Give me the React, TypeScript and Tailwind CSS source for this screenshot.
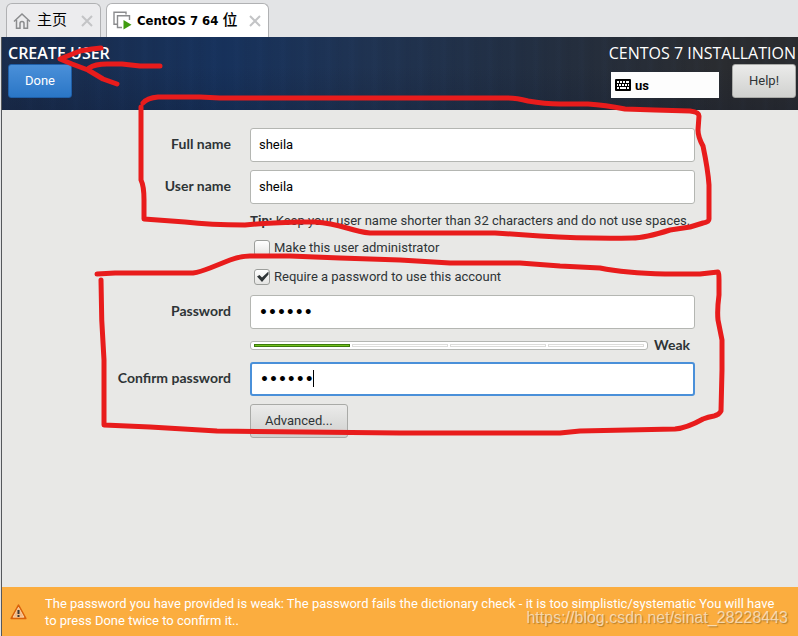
import { useState } from "react";
import type { ReactNode } from "react";

const BUTTON = "h-[34px] pb-[2px] rounded-[3px] border";
const BUTTON_GREY = "border-[#a9aaa7] bg-linear-to-b from-[#ebebea] to-[#d0d1cf] text-[#2e3436]";
const ENTRY = "w-full h-[34px] px-2 rounded-[3px] bg-white text-black outline-none";
const SECRET = "text-[14px] font-bold font-['DejaVu_Sans',sans-serif]";
const LABEL = "pb-[3px] text-[14px] font-bold font-['Lato',sans-serif]";

const STROKES = [
  // arrow to the Done button
  "M101 48L92 49L80 51L60 59L72 64L88 70L103 79L117 84",
  "M89 68Q95 64 107 64L122 64L140 66L160 66",
  // names
  "M143 103Q147 98 158 97L200 97L220 98H508Q517 98 528 101Q545 104 560 104H588Q605 105 625 109L655 110L690 111Q699 112 699 116L698 130Q698 137 703 146Q708 170 709 185V219Q709 222 703 223L690 227L670 230Q645 238 632 238Q590 239 540 236L495 233H370Q360 232 347 228Q330 223 315 222H298Q265 223 245 225Q210 225 185 222L144 219V200Q144 186 141 180V107",
  // passwords
  "M97 274L115 273H193Q200 272 210 268L230 260Q240 256 250 256H290L340 258L400 260L450 263H520L560 266L600 268Q625 273 665 274H700L718 272Q719 273 719 280V295Q717 310 718 320L722 340V370L721 411Q719 415 714 416Q708 417 703 419Q687 428 675 429L580 431L560 433H400L217 431L150 427L104 425V360Q101 320 101 280",
];

function HomeIcon() {
  return (
    <svg width="18" height="18" viewBox="0 0 18 18" fill="none" stroke="#8b8c8e" strokeWidth="1.5">
      <path d="M1 9.5L9 2L17 9.5" />
      <path d="M3.5 8V16.2H7V11.5Q7 9.5 9 9.5T11 11.5V16.2H14.5V8" />
    </svg>
  );
}

function MachineIcon() {
  return (
    <svg width="19" height="19" viewBox="0 0 19 19" fill="none">
      <path d="M4 13.2H1V1.2H13V3.5" stroke="#8b8c8e" strokeWidth="1.4" />
      <path d="M9 16.5H4.5V4.7H16.5V9" stroke="#8b8c8e" strokeWidth="1.4" />
      <path d="M10.5 9L18.5 13.8L10.5 18.5Z" fill="#3f9c0f" />
    </svg>
  );
}

function CloseIcon() {
  return (
    <svg width="12" height="12" viewBox="0 0 12 12" stroke="#c3c4c6" strokeWidth="2">
      <path d="M1 1L11 11M11 1L1 11" />
    </svg>
  );
}

function KeyboardIcon() {
  return (
    <svg width="16" height="12" viewBox="0 0 16 12">
      <rect width="16" height="12" rx="1" fill="#000" />
      <path d="M2 3H4M5 3H7M8 3H10M11 3H14M2 6H3M4 6H6M7 6H9M10 6H12M13 6H14M2 9H4M5 9H11M12 9H14" stroke="#fff" strokeWidth="2" />
    </svg>
  );
}

function WarningIcon() {
  return (
    <svg width="17" height="16" viewBox="0 0 17 16">
      <path d="M8.5 1.2L15.8 14.5H1.2Z" fill="#f7a75a" stroke="#d9620a" strokeWidth="1.6" strokeLinejoin="round" />
      <path d="M8.5 3.4L13.8 13H3.2Z" fill="#f0b987" stroke="#fbd3a8" strokeWidth="0.8" />
      <path d="M8.5 6V10M8.5 11V13" stroke="#3b3835" strokeWidth="2" />
    </svg>
  );
}

function CheckOption({ id, checked, onChange, children }: { id: string; checked: boolean; onChange: (v: boolean) => void; children: ReactNode }) {
  return (
    <div className="col-start-2 flex items-center gap-1 h-[21px] pl-1">
      <span className="relative size-4 shrink-0">
        <input
          id={id}
          type="checkbox"
          checked={checked}
          onChange={e => onChange(e.target.checked)}
          className="block appearance-none size-4 rounded-[3px] border border-[#9c9e9b] bg-linear-to-b from-white to-[#e4e4e2]"
        />
        {checked && (
          <svg className="absolute inset-0 pointer-events-none" width="16" height="16" viewBox="0 0 16 16">
            <path d="M3 7.5L5.5 6L8 8.5L14.5 2.5V5.5L8 13Z" fill="#2e3436" />
          </svg>
        )}
      </span>
      <label htmlFor={id}>{children}</label>
    </div>
  );
}

export default function App() {
  const [fullName, setFullName] = useState("sheila");
  const [userName, setUserName] = useState("sheila");
  const [admin, setAdmin] = useState(false);
  const [requirePassword, setRequirePassword] = useState(true);
  const [password, setPassword] = useState("sheila");
  const [confirm, setConfirm] = useState("sheila");

  return (
    <div className="relative min-h-screen flex flex-col bg-[#e3e4e6] text-[13px] leading-[17px] text-[#2e3436] font-['Roboto','Noto_Sans_CJK_SC',sans-serif]">
      {/* VM tabs */}
      <nav className="flex items-end gap-[5px] h-[37px] pl-[6px] text-black font-['DejaVu_Sans_Condensed','Noto_Sans_CJK_SC',sans-serif]">
        <div className="flex items-center h-[34px] pl-[6px] pr-[7px] gap-[14px] rounded-t-md border border-b-0 border-[#b0b1b3] bg-[#ececee]">
          <a href="#home" className="flex items-center gap-[6px] text-[15px]">
            <HomeIcon />
            主页
          </a>
          <button aria-label="Close home tab"><CloseIcon /></button>
        </div>
        <div className="flex items-center h-[34px] pl-[6px] pr-[7px] gap-[12px] rounded-t-md border border-b-0 border-[#b0b1b3] bg-white">
          <a href="#vm" className="flex items-center gap-[5px] text-[13px] font-bold">
            <MachineIcon />
            <span>CentOS 7 64 <span className="text-[15px] font-medium">位</span></span>
          </a>
          <button aria-label="Close machine tab"><CloseIcon /></button>
        </div>
      </nav>

      <div className="flex-1 flex flex-col ml-px border-l border-[#55585c] bg-[#e8e8e6]">
        {/* Banner */}
        <header className="flex justify-between h-[73px] pl-[6px] pr-[2px] pt-2 text-white bg-[linear-gradient(to_bottom,transparent_40%,rgba(10,18,40,0.2)),repeating-linear-gradient(to_right,transparent_0px,rgba(90,140,220,0.02)_5px,transparent_9px,rgba(0,0,0,0.02)_14px,transparent_23px),linear-gradient(to_right,#1a2c4b,#17325c_28%,#1f3352_45%,#222f43_65%,#2a2c30_90%)]">
          <div className="flex flex-col items-start gap-[2px]">
            <h1 className="text-[16px] font-semibold font-['Open_Sans',sans-serif]">CREATE USER</h1>
            <button className={`px-4 border-[#1f5fa8] bg-linear-to-b from-[#4a90d9] to-[#2a76c6] ${BUTTON}`}>Done</button>
          </div>
          <div className="flex flex-col items-end gap-[2px]">
            <p className="text-[16px] font-['Open_Sans',sans-serif]">CENTOS 7 INSTALLATION</p>
            <div className="flex items-center gap-[13px]">
              <div className="flex items-center gap-1 w-[108px] h-[26px] mt-2 px-1 bg-[#fdfdfd] text-black font-bold">
                <KeyboardIcon />
                us
              </div>
              <button className={`px-4 ${BUTTON} ${BUTTON_GREY}`}>Help!</button>
            </div>
          </div>
        </header>

        {/* Account form */}
        <form className="flex-1 grid grid-cols-[229px_minmax(0,1fr)] content-start items-center gap-x-[19px] gap-y-2 pt-[18px] pr-[103px]" onSubmit={e => e.preventDefault()}>
          <label htmlFor="full-name" className={`text-right ${LABEL}`}>Full name</label>
          <input id="full-name" value={fullName} onChange={e => setFullName(e.target.value)} className={`${ENTRY} pb-[2px] border border-[#b4b6b2]`} />

          <label htmlFor="user-name" className={`text-right ${LABEL}`}>User name</label>
          <input id="user-name" value={userName} onChange={e => setUserName(e.target.value)} className={`${ENTRY} pb-[2px] border border-[#b4b6b2]`} />

          <p className="col-start-2 whitespace-nowrap"><b className="font-bold">Tip:</b> Keep your user name shorter than 32 characters and do not use spaces.</p>

          <CheckOption id="admin" checked={admin} onChange={setAdmin}>Make this user administrator</CheckOption>
          <CheckOption id="require" checked={requirePassword} onChange={setRequirePassword}>Require a password to use this account</CheckOption>

          <label htmlFor="password" className={`text-right ${LABEL}`}>Password</label>
          <input id="password" type="password" value={password} onChange={e => setPassword(e.target.value)} className={`${ENTRY} ${SECRET} border border-[#b4b6b2]`} />

          <div className="col-start-2 flex items-center gap-[6px] h-[17px] pr-[5px]">
            <div className="flex-1 flex gap-[2px] h-[9px] py-[2px] px-[3px] rounded-[3px] border border-[#b4b6b2] bg-white">
              <span className="flex-1 border border-[#3c7a0c] bg-[#73c21e]" />
              <span className="flex-1 border border-[#dcdcda]" />
              <span className="flex-1 border border-[#dcdcda]" />
              <span className="flex-1 border border-[#dcdcda]" />
            </div>
            <span className={LABEL}>Weak</span>
          </div>

          <label htmlFor="confirm" className={`text-right ${LABEL}`}>Confirm password</label>
          <div className="relative">
            <input id="confirm" type="password" value={confirm} onChange={e => setConfirm(e.target.value)} className={`${ENTRY} ${SECRET} block border-2 border-[#4a90d9]`} />
            <span className="absolute left-[63px] top-2 w-px h-[17px] bg-black" />
          </div>

          <button type="button" className={`col-start-2 justify-self-start px-[14px] ${BUTTON} ${BUTTON_GREY}`}>Advanced...</button>
        </form>

        {/* Warning bar */}
        <footer className="relative flex items-center gap-[18px] h-[49px] pl-2 pr-[10px] bg-[#fbad3f] text-white">
          <span className="shrink-0"><WarningIcon /></span>
          <p>The password you have provided is weak: The password fails the dictionary check - it is too simplistic/systematic You will have to press Done twice to confirm it..</p>
          <span className="absolute right-[10px] bottom-[10px] text-[16px] text-white/60 [text-shadow:1px_1px_1px_rgba(120,80,20,0.5)] font-['Liberation_Sans',sans-serif]">https://blog.csdn.net/sinat_28228443</span>
        </footer>
      </div>

      {/* Red pen marks */}
      <svg className="absolute inset-0 w-full h-full pointer-events-none" fill="none" stroke="#e81c1c" strokeWidth="5" strokeLinecap="round" strokeLinejoin="round">
        {STROKES.map(d => <path key={d} d={d} />)}
      </svg>
    </div>
  );
}
